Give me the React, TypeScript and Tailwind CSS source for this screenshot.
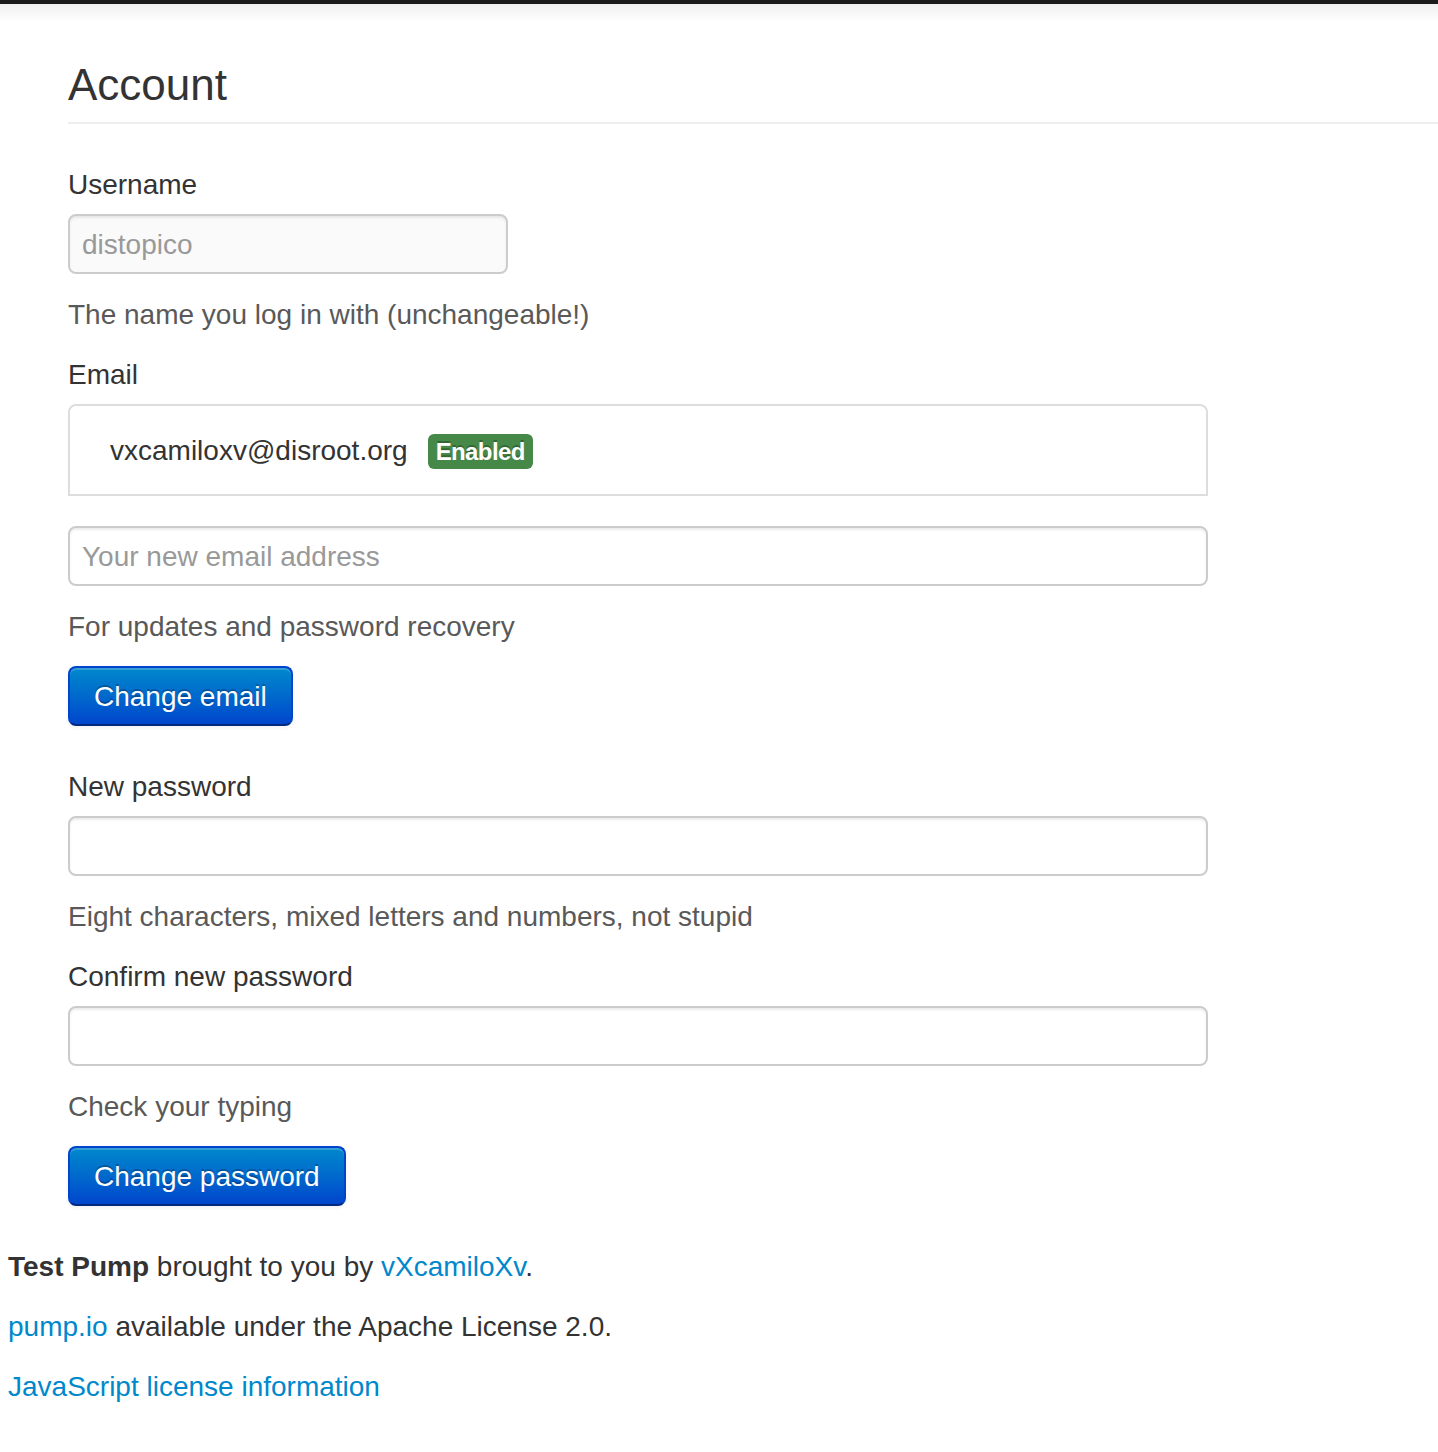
import React from 'react';

const font = "font-['Liberation_Sans','Helvetica_Neue',Helvetica,Arial,sans-serif]";

const inputCls =
  'block w-[1140px] h-[60px] px-[12px] text-[28px] leading-[40px] text-[#555] bg-white border-2 border-[#ccc] rounded-[8px] shadow-[inset_0_2px_2px_rgba(0,0,0,0.075)] placeholder:text-[#999] outline-none';

const btnCls =
  'block h-[60px] px-[24px] pt-[2px] text-[28px] leading-[38px] text-white rounded-[8px] border-2 border-[#0044cc] border-b-[#002a80] bg-gradient-to-b from-[#0088cc] to-[#0044cc] [text-shadow:0_-2px_0_rgba(0,0,0,0.25)] shadow-[inset_0_2px_0_rgba(255,255,255,0.2),0_2px_4px_rgba(0,0,0,0.05)]';

function Label({ children }: { children: React.ReactNode }) {
  return <label className="block pt-[2px] leading-[38px] mb-[10px] text-[#333]">{children}</label>;
}

function Help({ children }: { children: React.ReactNode }) {
  return <span className="block pt-[2px] leading-[38px] mb-[20px] text-[#595959]">{children}</span>;
}

export default function App() {
  return (
    <div className={`${font} min-h-[1452px] bg-white text-[28px] text-[#333]`}>
      {/* navbar edge */}
      <div className="h-[4px] bg-[#1b1b1b]" />
      <div className="h-[18px] bg-gradient-to-b from-[#f0f0f0] to-white" />

      <div className="pl-[68px]">
        {/* Page header */}
        <div className="mt-[31px] pb-[9px] border-b-2 border-[#eee] mb-[40px]">
          <h1 className="text-[44px] leading-[60px] pt-[2px] h-[60px] font-normal text-[#333]">Account</h1>
        </div>

        <form className="w-[1140px]" onSubmit={e => e.preventDefault()}>
          <Label>Username</Label>
          <input
            className="block w-[440px] h-[60px] px-[12px] pt-[2px] mb-[20px] text-[28px] leading-[38px] text-[#999] bg-[#fafafa] border-2 border-[#ccc] rounded-[8px] shadow-[inset_0_2px_2px_rgba(0,0,0,0.075)] outline-none"
            value="distopico"
            disabled
            readOnly
          />
          <Help>The name you log in with (unchangeable!)</Help>

          <Label>Email</Label>
          <div className="h-[92px] border-2 border-[#ddd] rounded-t-[8px] flex items-center pl-[40px] gap-[20px] mb-[30px]">
            <span className="text-[#333] pt-[2px]">vxcamiloxv@disroot.org</span>
            <span className="h-[35px] px-[8px] mt-[3px] flex items-center rounded-[6px] bg-[#468847] text-white font-bold text-[24px] tracking-[-0.6px] [text-shadow:0_-2px_0_rgba(0,0,0,0.25)]">
              Enabled
            </span>
          </div>

          <input className={`${inputCls} mb-[20px] pt-[2px]`} placeholder="Your new email address" />
          <Help>For updates and password recovery</Help>
          <button className={btnCls}>Change email</button>

          <div className="mt-[40px]">
            <Label>New password</Label>
            <input type="password" className={`${inputCls} mb-[20px]`} />
            <Help>Eight characters, mixed letters and numbers, not stupid</Help>

            <Label>Confirm new password</Label>
            <input type="password" className={`${inputCls} mb-[20px]`} />
            <Help>Check your typing</Help>
            <button className={btnCls}>Change password</button>
          </div>
        </form>
      </div>

      <footer className="pl-[8px] mt-[41px] leading-[40px]">
        <p className="mb-[20px]">
          <strong className="font-bold">Test Pump</strong> brought to you by{' '}
          <a className="text-[#0088cc]" href="#">vXcamiloXv</a>.
        </p>
        <p className="mb-[20px]">
          <a className="text-[#0088cc]" href="#">pump.io</a> available under the Apache License 2.0.
        </p>
        <p>
          <a className="text-[#0088cc]" href="#">JavaScript license information</a>
        </p>
      </footer>
    </div>
  );
}
